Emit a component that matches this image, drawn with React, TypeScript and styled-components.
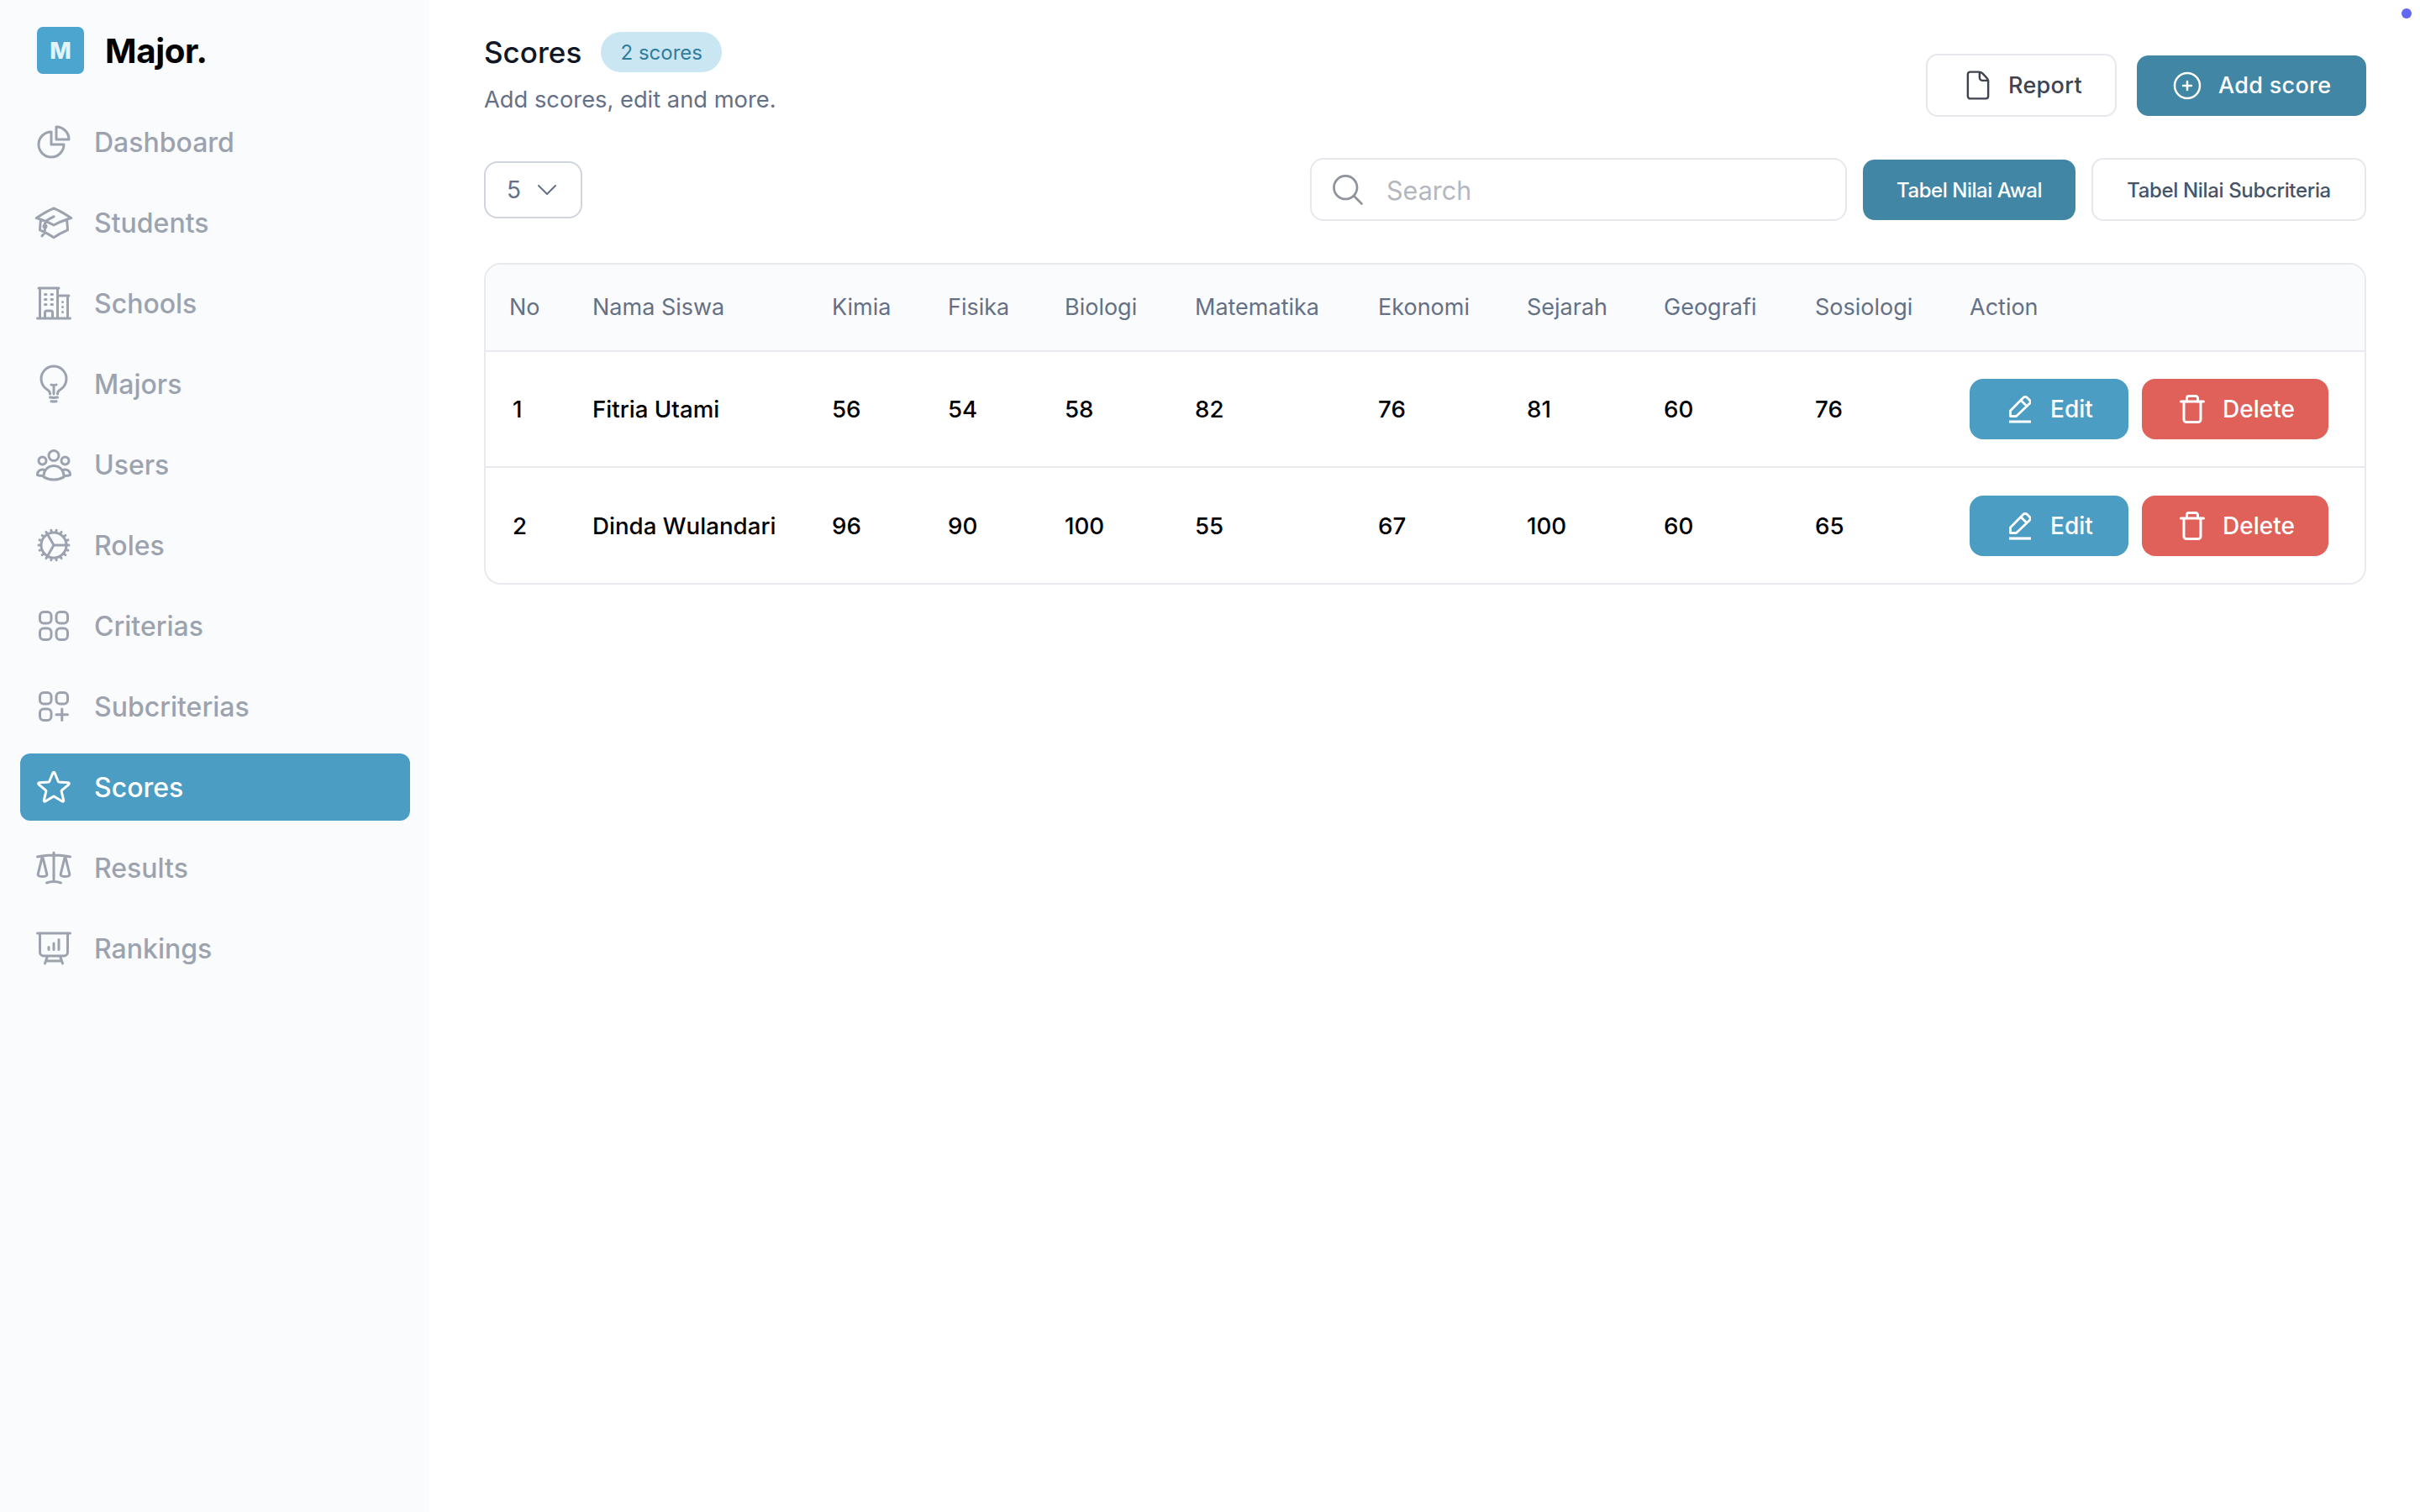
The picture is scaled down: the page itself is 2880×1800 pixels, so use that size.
import styled, { createGlobalStyle } from 'styled-components';
import { IconType } from 'react-icons';
import {
    HiOutlineAcademicCap,
    HiOutlineBuildingOffice2,
    HiOutlineChartPie,
    HiOutlineChevronDown,
    HiOutlineCog,
    HiOutlineLightBulb,
    HiOutlineMagnifyingGlass,
    HiOutlinePlusCircle,
    HiOutlinePresentationChartBar,
    HiOutlineScale,
    HiOutlineSquares2X2,
    HiOutlineSquaresPlus,
    HiOutlineStar,
    HiOutlineUserGroup
} from 'react-icons/hi2';

const GlobalStyle = createGlobalStyle`
    html, body {
        margin: 0;
        padding: 0;
        background: #ffffff;
    }
    * {
        box-sizing: border-box;
    }
    body {
        font-family: Inter, "Liberation Sans", sans-serif;
    }
`;

const Page = styled.div`
    display: flex;
    height: 1800px;
    position: relative;
    overflow: hidden;
`;

const StatusDot = styled.span`
    position: absolute;
    top: 10px;
    right: 10px;
    width: 12px;
    height: 12px;
    border-radius: 50%;
    background: #6366f1;
`;

const Aside = styled.aside`
    width: 511px;
    flex-shrink: 0;
    background: #f9fbfd;
    padding: 32px 23px 32px 24px;
`;

const Brand = styled.div`
    display: flex;
    align-items: center;
    gap: 25px;
    padding-left: 20px;
    height: 56px;
`;

const BrandMark = styled.div`
    width: 56px;
    height: 56px;
    border-radius: 7px;
    background: #4ba5cf;
    color: #e4f3fa;
    display: flex;
    align-items: center;
    justify-content: center;
    font-size: 27px;
    font-weight: 800;
`;

const BrandName = styled.div`
    font-size: 40.3px;
    font-weight: 700;
    letter-spacing: -0.4px;
    color: #000000;
`;

const Nav = styled.nav`
    display: flex;
    flex-direction: column;
    gap: 16px;
    margin-top: 41px;
`;

const NavItem = styled.a<{ $active?: boolean }>`
    display: flex;
    align-items: center;
    gap: 24px;
    height: 80px;
    padding-left: 16px;
    border-radius: 12px;
    font-size: 32px;
    font-weight: 500;
    background: ${p => (p.$active ? '#4b9dc3' : 'transparent')};
    color: ${p => (p.$active ? '#ffffff' : '#9ca3af')};

    svg {
        width: 48px;
        height: 48px;
        flex-shrink: 0;
    }
`;

const Main = styled.main`
    flex: 1;
    padding: 38px 64px 0 65px;
`;

const PageHeader = styled.header`
    display: flex;
    justify-content: space-between;
    height: 101px;
`;

const TitleRow = styled.div`
    display: flex;
    align-items: center;
    gap: 23px;
    height: 48px;
`;

const Title = styled.h1`
    margin: 0;
    font-size: 35px;
    font-weight: 500;
    color: #101828;
`;

const Badge = styled.span`
    height: 48px;
    width: 144px;
    display: flex;
    align-items: center;
    justify-content: center;
    border-radius: 24px;
    background: #c9e6f2;
    color: #2f7d9c;
    font-size: 24px;
`;

const Subtitle = styled.p`
    margin: 13px 0 0;
    font-size: 27.3px;
    line-height: 40px;
    color: #667085;
`;

const HeaderActions = styled.div`
    display: flex;
    align-items: center;
    gap: 24px;
    margin-top: 26px;
`;

const ActionButton = styled.button<{ $primary?: boolean }>`
    display: flex;
    align-items: center;
    gap: ${p => (p.$primary ? '17px' : '22px')};
    height: ${p => (p.$primary ? '72px' : '75px')};
    width: ${p => (p.$primary ? '273px' : '227px')};
    padding: 0 0 0 ${p => (p.$primary ? '40px' : '46px')};
    border-radius: 14px;
    border: ${p => (p.$primary ? 'none' : '2px solid #e7e8ec')};
    background: ${p => (p.$primary ? '#4186a5' : '#ffffff')};
    color: ${p => (p.$primary ? '#ffffff' : '#3f4350')};
    font-family: inherit;
    font-size: 27px;
    font-weight: 500;
    letter-spacing: 0.3px;

    svg {
        flex-shrink: 0;
    }
`;

const Toolbar = styled.div`
    display: flex;
    align-items: center;
    justify-content: space-between;
    margin-top: 49px;
`;

const LimitSelect = styled.div`
    display: flex;
    align-items: center;
    gap: 15px;
    width: 117px;
    height: 68px;
    padding-left: 25px;
    border: 2px solid #d0d5dd;
    border-radius: 16px;
    color: #667085;
    font-size: 28px;

    svg {
        width: 32px;
        height: 32px;
    }
`;

const ToolbarRight = styled.div`
    display: flex;
    align-items: center;
    gap: 19px;
`;

const SearchBox = styled.label`
    display: flex;
    align-items: center;
    gap: 24px;
    width: 639px;
    height: 75px;
    padding-left: 21px;
    border: 2px solid #e7e8ec;
    border-radius: 16px;
    color: #8f949c;

    svg {
        width: 44px;
        height: 44px;
        flex-shrink: 0;
    }
`;

const SearchInput = styled.input`
    flex: 1;
    min-width: 0;
    padding: 2px 0 0;
    border: none;
    outline: none;
    background: transparent;
    font-family: inherit;
    font-size: 30.5px;

    &::placeholder {
        color: #b4b7bd;
    }
`;

const TabButton = styled.button<{ $active?: boolean }>`
    height: ${p => (p.$active ? '72px' : '75px')};
    width: ${p => (p.$active ? '253px' : '327px')};
    padding: 1px 0 0;
    border-radius: 14px;
    border: ${p => (p.$active ? 'none' : '2px solid #e7e8ec')};
    background: ${p => (p.$active ? '#4186a5' : '#ffffff')};
    color: ${p => (p.$active ? '#ffffff' : '#475467')};
    font-family: inherit;
    font-size: 24px;
    font-weight: 500;
    letter-spacing: ${p => (p.$active ? '-0.45px' : '-0.35px')};
`;

const TableCard = styled.div`
    margin-top: 50px;
    border: 2px solid #e9eaee;
    border-radius: 20px;
    overflow: hidden;
`;

const Table = styled.table`
    width: 100%;
    border-collapse: collapse;
    table-layout: fixed;
`;

const HeadRow = styled.tr`
    height: 103px;
    background: #f9fbfc;
    border-bottom: 2px solid #e9eaee;
`;

const BodyRow = styled.tr`
    height: 138px;

    & + & {
        border-top: 2px solid #e9eaee;
    }
`;

const Th = styled.th`
    padding: 0 0 2px 28px;
    text-align: left;
    font-size: 27px;
    font-weight: 400;
    color: #667085;
`;

const Td = styled.td<{ $narrow?: boolean }>`
    padding: 0 0 0 ${p => (p.$narrow ? '32px' : '28px')};
    font-size: 27.7px;
    font-weight: 500;
    color: #000000;
`;

const RowActions = styled.div`
    display: flex;
    gap: 16px;
`;

const RowButton = styled.button<{ $danger?: boolean }>`
    display: flex;
    align-items: center;
    gap: ${p => (p.$danger ? '21px' : '23px')};
    width: ${p => (p.$danger ? '222px' : '189px')};
    height: 72px;
    padding: 0 0 0 ${p => (p.$danger ? '45px' : '47px')};
    border: none;
    border-radius: 16px;
    background: ${p => (p.$danger ? '#e0605a' : '#4b9dc3')};
    color: #ffffff;
    font-family: inherit;
    font-size: 28px;
    font-weight: 500;

    svg {
        flex-shrink: 0;
    }
`;

const ReportIcon = () => (
    <svg width="28" height="37" viewBox="0 0 30 38" fill="none" stroke="currentColor" strokeWidth="2.6" strokeLinecap="round" strokeLinejoin="round">
        <path d="M5 2h11c2 0 3.5.7 5 2.2l4.8 5c1.4 1.4 2.2 3 2.2 5V33a3 3 0 0 1-3 3H5a3 3 0 0 1-3-3V5a3 3 0 0 1 3-3z" />
        <path d="M17 2.5V9a4 4 0 0 0 4 4h7" />
    </svg>
);

const PenIcon = () => (
    <svg width="26" height="34" viewBox="0 0 26 34" fill="none" stroke="currentColor" strokeWidth="2.8" strokeLinejoin="round">
        <path d="M1.5 25.5V19L17 3.2a3 3 0 0 1 4.3 0l3 3a3 3 0 0 1 0 4.3L8.5 25.5z" />
        <path d="M14 6.5l6.5 6.5" />
        <path d="M0 32h26" strokeWidth="3.2" />
    </svg>
);

const BinIcon = () => (
    <svg width="30" height="34" viewBox="0 0 30 34" fill="none" stroke="currentColor" strokeWidth="3" strokeLinecap="round" strokeLinejoin="round">
        <path d="M1.5 8h27" />
        <path d="M8.5 8V4a2.5 2.5 0 0 1 2.5-2.5h8A2.5 2.5 0 0 1 21.5 4v4" />
        <path d="M5 8v21.5A3 3 0 0 0 8 32.5h14a3 3 0 0 0 3-3V8" />
    </svg>
);

const menu: { label: string; icon: IconType; active?: boolean }[] = [
    { label: 'Dashboard', icon: HiOutlineChartPie },
    { label: 'Students', icon: HiOutlineAcademicCap },
    { label: 'Schools', icon: HiOutlineBuildingOffice2 },
    { label: 'Majors', icon: HiOutlineLightBulb },
    { label: 'Users', icon: HiOutlineUserGroup },
    { label: 'Roles', icon: HiOutlineCog },
    { label: 'Criterias', icon: HiOutlineSquares2X2 },
    { label: 'Subcriterias', icon: HiOutlineSquaresPlus },
    { label: 'Scores', icon: HiOutlineStar, active: true },
    { label: 'Results', icon: HiOutlineScale },
    { label: 'Rankings', icon: HiOutlinePresentationChartBar }
];

const columns = [
    { title: 'No', width: 99 },
    { title: 'Nama Siswa', width: 285 },
    { title: 'Kimia', width: 138 },
    { title: 'Fisika', width: 139 },
    { title: 'Biologi', width: 155 },
    { title: 'Matematika', width: 218 },
    { title: 'Ekonomi', width: 177 },
    { title: 'Sejarah', width: 163 },
    { title: 'Geografi', width: 180 },
    { title: 'Sosiologi', width: 184 },
    { title: 'Action', width: 498 }
];

const scores = [
    { no: 1, name: 'Fitria Utami', values: [56, 54, 58, 82, 76, 81, 60, 76] },
    { no: 2, name: 'Dinda Wulandari', values: [96, 90, 100, 55, 67, 100, 60, 65] }
];

export default function App() {
    return (
        <Page>
            <GlobalStyle />
            <StatusDot />
            <Aside>
                <Brand>
                    <BrandMark>M</BrandMark>
                    <BrandName>Major.</BrandName>
                </Brand>
                <Nav>
                    {menu.map(({ label, icon: Icon, active }) => (
                        <NavItem key={label} $active={active}>
                            <Icon />
                            {label}
                        </NavItem>
                    ))}
                </Nav>
            </Aside>
            <Main>
                <PageHeader>
                    <div>
                        <TitleRow>
                            <Title>Scores</Title>
                            <Badge>2 scores</Badge>
                        </TitleRow>
                        <Subtitle>Add scores, edit and more.</Subtitle>
                    </div>
                    <HeaderActions>
                        <ActionButton>
                            <ReportIcon />
                            Report
                        </ActionButton>
                        <ActionButton $primary>
                            <HiOutlinePlusCircle size={40} />
                            Add score
                        </ActionButton>
                    </HeaderActions>
                </PageHeader>
                <Toolbar>
                    <LimitSelect>
                        5
                        <HiOutlineChevronDown />
                    </LimitSelect>
                    <ToolbarRight>
                        <SearchBox>
                            <HiOutlineMagnifyingGlass />
                            <SearchInput placeholder="Search" />
                        </SearchBox>
                        <TabButton $active>Tabel Nilai Awal</TabButton>
                        <TabButton>Tabel Nilai Subcriteria</TabButton>
                    </ToolbarRight>
                </Toolbar>
                <TableCard>
                    <Table>
                        <colgroup>
                            {columns.map(col => (
                                <col key={col.title} width={col.width} />
                            ))}
                        </colgroup>
                        <thead>
                            <HeadRow>
                                {columns.map(col => (
                                    <Th key={col.title}>{col.title}</Th>
                                ))}
                            </HeadRow>
                        </thead>
                        <tbody>
                            {scores.map(row => (
                                <BodyRow key={row.no}>
                                    <Td $narrow>{row.no}</Td>
                                    <Td>{row.name}</Td>
                                    {row.values.map((value, i) => (
                                        <Td key={i}>{value}</Td>
                                    ))}
                                    <Td>
                                        <RowActions>
                                            <RowButton>
                                                <PenIcon />
                                                Edit
                                            </RowButton>
                                            <RowButton $danger>
                                                <BinIcon />
                                                Delete
                                            </RowButton>
                                        </RowActions>
                                    </Td>
                                </BodyRow>
                            ))}
                        </tbody>
                    </Table>
                </TableCard>
            </Main>
        </Page>
    );
}
